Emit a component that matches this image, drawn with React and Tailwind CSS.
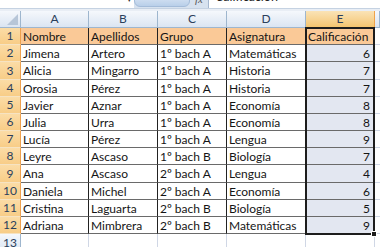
import React from "react";

const rows = [
  ["Nombre", "Apellidos", "Grupo", "Asignatura", "Calificación"],
  ["Jimena", "Artero", "1º bach A", "Matemáticas", "6"],
  ["Alicia", "Mingarro", "1º bach A", "Historia", "7"],
  ["Orosia", "Pérez", "1º bach A", "Historia", "7"],
  ["Javier", "Aznar", "1º bach A", "Economía", "8"],
  ["Julia", "Urra", "1º bach A", "Economía", "8"],
  ["Lucía", "Pérez", "1º bach A", "Lengua", "9"],
  ["Leyre", "Ascaso", "1º bach B", "Biología", "7"],
  ["Ana", "Ascaso", "2º bach A", "Lengua", "4"],
  ["Daniela", "Michel", "2º bach A", "Economía", "6"],
  ["Cristina", "Laguarta", "2º bach B", "Biología", "5"],
  ["Adriana", "Mimbrera", "2º bach B", "Matemáticas", "9"],
];

const widths = ["w-[68px]", "w-[69px]", "w-[69px]", "w-[79px]", "w-[69px]"];
const letters = ["A", "B", "C", "D", "E"];

function HeaderCell({ label, w, selected }) {
  return (
    <div
      className={
        "shrink-0 h-full flex items-center justify-center border-r border-b text-[12px] " +
        w +
        (selected
          ? " bg-gradient-to-b from-[#fae3b6] to-[#f4c56f] border-[#f0a34a] text-[#2b3f5c]"
          : " bg-gradient-to-b from-[#f5f8fc] to-[#dbe5f2] border-[#9eb6ce] text-[#2b3f5c]")
      }
    >
      {label}
    </div>
  );
}

export default function App() {
  return (
    <div className="relative w-[380px] h-[247px] overflow-hidden bg-white font-['Lato',sans-serif] text-[12px] text-[#151515]">
      {/* formula bar */}
      <div className="flex h-[8px] bg-[#d7e2ef] overflow-hidden">
        <div className="w-[125px] shrink-0 bg-white overflow-hidden">
          <div className="pl-[52px] mt-[-11px] leading-[13px] text-[12.5px] text-[#222]">E1</div>
        </div>
        <div className="w-[9px] shrink-0 bg-white flex justify-center overflow-hidden">
          <div className="mt-[-6px] text-[9px] leading-[10px] text-[#333]">▾</div>
        </div>
        <div className="w-[56px] shrink-0 mt-[-8px] h-[15px] rounded-[6px] bg-gradient-to-b from-[#e4edf8] to-[#b9cfe9] border border-[#a4bcd9]" />
        <div className="w-[18px] shrink-0 flex justify-center overflow-hidden">
          <div className="mt-[-7px] italic text-[11px] leading-[12px] text-[#555] font-['Liberation_Serif',serif]">fx</div>
        </div>
        <div className="flex-1 bg-white border-l border-[#a5b7cf] overflow-hidden">
          <div className="pl-[6px] mt-[-10px] leading-[13px] text-[12.5px] text-[#222]">Calificación</div>
        </div>
      </div>
      <div className="h-[3px] bg-[#e9eef5] border-t border-[#c5d2e2]" />

      {/* column header row */}
      <div className="flex h-[17px]">
        <div className="w-[21px] shrink-0 h-full flex items-end justify-end pr-[2px] pb-[2px] bg-gradient-to-b from-[#f5f8fc] to-[#dbe5f2] border-r border-b border-[#9eb6ce]">
          <svg width="11" height="11" viewBox="0 0 11 11">
            <polygon points="11,0 11,11 0,11" fill="#b7c6d8" />
          </svg>
        </div>
        {letters.map((l, i) => (
          <HeaderCell key={l} label={l} w={widths[i]} selected={i === 4} />
        ))}
        <HeaderCell label="" w="flex-1" />
      </div>

      {/* data rows */}
      {rows.map((r, ri) => {
        const h = ri === 2 || ri === 8 ? "h-[18px]" : "h-[17px]";
        return (
          <div key={ri} className={"flex " + h}>
            <div className="w-[21px] shrink-0 h-full flex items-center justify-center text-[12px] text-[#2b3f5c] bg-gradient-to-b from-[#fbdca6] to-[#f8cd87] border-r border-r-[#eea14f] border-b border-b-[#f6e3c2]">
              {ri + 1}
            </div>
            {r.map((c, ci) => {
              const isHead = ri === 0;
              const isE = ci === 4;
              let bg = "bg-white";
              if (isHead) bg = "bg-[#fac997]";
              else if (isE) bg = "bg-[#e3e7f1]";
              return (
                <div
                  key={ci}
                  className={
                    "shrink-0 h-full flex items-center px-[2px] pt-[1px] overflow-hidden whitespace-nowrap border-r border-r-[#222] border-b border-b-[#6a6a6a] " +
                    widths[ci] +
                    " " +
                    bg +
                    (isE && !isHead ? " justify-end pr-[4px]" : "")
                  }
                >
                  {c}
                </div>
              );
            })}
            <div className="flex-1 h-full border-b border-[#d0d7e5]" />
          </div>
        );
      })}

      {/* row 13 */}
      <div className="flex h-[17px]">
        <div className="w-[21px] shrink-0 h-full flex items-center justify-center text-[12px] text-[#2b3f5c] bg-gradient-to-b from-[#f5f8fc] to-[#dbe5f2] border-r border-[#9eb6ce]">
          13
        </div>
        {widths.map((w, i) => (
          <div key={i} className={"shrink-0 h-full border-r border-[#d0d7e5] " + w} />
        ))}
        <div className="flex-1" />
      </div>

      {/* selection overlay */}
      <div className="absolute left-[305px] top-[27px] w-[70px] h-[208px] border-2 border-[#1d1d1d] pointer-events-none" />
      <div className="absolute left-[371px] top-[231px] w-[6px] h-[6px] bg-[#1d1d1d] border border-white pointer-events-none" />
    </div>
  );
}
